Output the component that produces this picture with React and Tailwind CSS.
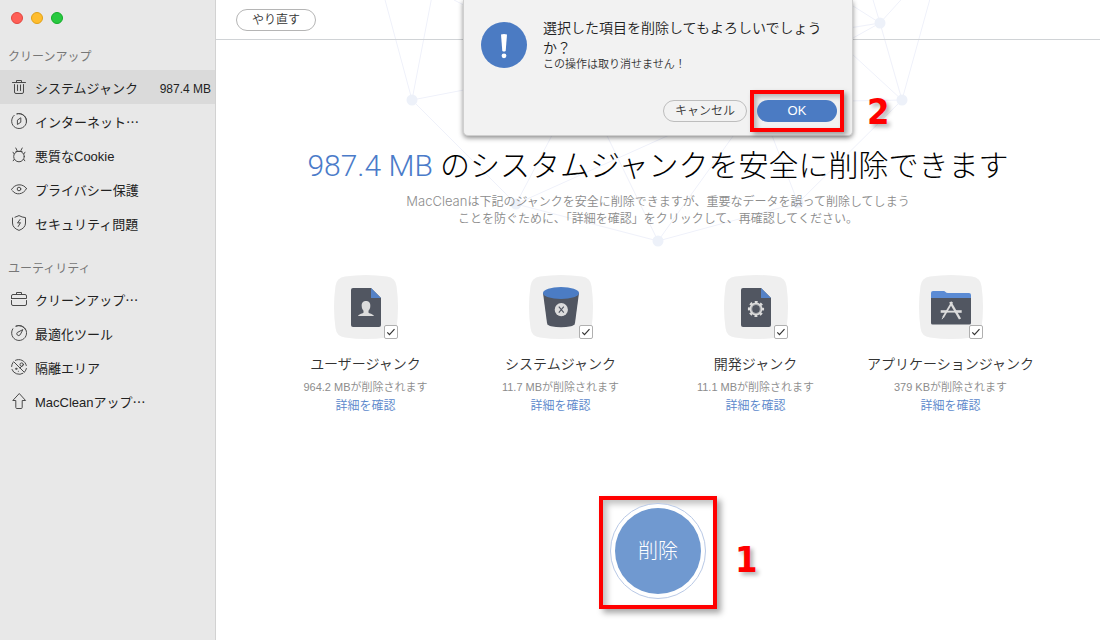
import { useState } from "react";

const stroke = {
  fill: "none",
  stroke: "currentColor",
  strokeWidth: 1,
  strokeLinecap: "round",
  strokeLinejoin: "round",
};

const navIcons = {
  trash: (
    <g {...stroke}>
      <path d="M1.5 3.5h13M5.500 3.500v-2h5v2" />
      <path d="M3.500 5.500V13a1.500 1.500 0 0 0 1.500 1.500h6a1.500 1.500 0 0 0 1.500-1.500V5.500" />
      <path d="M6.500 6v5.500M9.500 6v5.500" />
    </g>
  ),
  compass: (
    <g {...stroke}>
      <path d="M3.200 2.300A7.500 7.500 0 1 0 6 .8" />
      <path d="M6 .8A7.500 7.500 0 0 1 15.400 9" />
      <path d="M9.800 5.200v4l-3.400 2.300v-4z" />
    </g>
  ),
  bug: (
    <g {...stroke}>
      <circle cx="8" cy="9.500" r="5.300" />
      <path d="M5 4.500h6M6.200 3.800L4.800 1M9.800 3.800L11.200 1" />
      <path d="M3.200 7L2 5.200M12.800 7L14 5.200M3.300 12.300L2.200 13.800M12.700 12.300l1.100 1.500" />
    </g>
  ),
  eye: (
    <g {...stroke}>
      <path d="M.5 8.500C4 2.300 12 2.300 15.500 7.500" />
      <path d="M15.500 7.500C12.500 14 4.500 14.500 1.500 9.800" />
      <circle cx="8" cy="8" r="1.800" />
    </g>
  ),
  shield: (
    <g {...stroke}>
      <path d="M4 2.200L8 .6Q11 2.300 14.500 2.600V8q0 5-6.500 7.400Q1.500 13 1.500 8V3" />
      <path d="M9 4.500L6.500 8l3-.3L7.200 11.500" />
    </g>
  ),
  briefcase: (
    <g {...stroke}>
      <path d="M.5 7.500h15V5q0-1.500-1.500-1.500H2Q.5 3.500.5 5v2.500" />
      <path d="M5.500 3.500v-2h5v2M.5 9.500v3.500q0 1.500 1.500 1.500h12q1.500 0 1.500-1.500V9.500" />
    </g>
  ),
  gauge: (
    <g {...stroke}>
      <path d="M1.800 3.800A7.500 7.500 0 1 0 5 1.100" />
      <path d="M5 1.100A7.500 7.500 0 0 1 14.800 5" />
      <path d="M11.500 4.800L6.300 7.500A1.800 1.800 0 1 0 9 10z" />
    </g>
  ),
  quarantine: (
    <g {...stroke}>
      <path d="M4.500 1.300A7.500 7.500 0 0 1 15.300 6.500M15.400 9.500a7.500 7.500 0 0 1-1.600 3.200M12 14.300A7.500 7.500 0 0 1 1 10.500M.6 7.500A7.500 7.500 0 0 1 2 3.500" />
      <path d="M2.800 2.800L13.300 13.300M9 9l2.500-2.500" />
      <circle cx="10.700" cy="5.600" r="1.700" />
      <circle cx="5.200" cy="9.800" r=".7" />
      <path d="M7.300 12.300h.1" />
    </g>
  ),
  arrow: (
    <g {...stroke}>
      <path d="M8 .8L1.800 7.500h3v7q0 1 1 1h4.400q1 0 1-1v-7h3z" />
    </g>
  ),
};

const groups = [
  {
    title: "クリーンアップ",
    items: [
      { icon: "trash", label: "システムジャンク", size: "987.4 MB", active: true },
      { icon: "compass", label: "インターネット⋯" },
      { icon: "bug", label: "悪質なCookie" },
      { icon: "eye", label: "プライバシー保護" },
      { icon: "shield", label: "セキュリティ問題" },
    ],
  },
  {
    title: "ユーティリティ",
    items: [
      { icon: "briefcase", label: "クリーンアップ⋯" },
      { icon: "gauge", label: "最適化ツール" },
      { icon: "quarantine", label: "隔離エリア" },
      { icon: "arrow", label: "MacCleanアップ⋯" },
    ],
  },
];

function Sidebar() {
  return (
    <aside className="flex w-[216px] shrink-0 flex-col border-r border-[#d2d2d2] bg-[#e8e8e8]">
      <div className="flex gap-2 px-[11px] pt-3">
        <button aria-label="閉じる" className="size-3 rounded-full border border-[#e2463f] bg-[#ff5f57]" />
        <button aria-label="しまう" className="size-3 rounded-full border border-[#e1a116] bg-[#ffbd2e]" />
        <button aria-label="拡大" className="size-3 rounded-full border border-[#12ac28] bg-[#28c940]" />
      </div>
      <nav className="flex flex-col gap-[10px] pt-[14px]">
        {groups.map((group) => (
          <section key={group.title}>
            <h2 className="flex h-8 items-center px-2 pt-[6px] text-[12px] text-[#777]">{group.title}</h2>
            <ul>
              {group.items.map((item) => (
                <li key={item.label}>
                  <a
                    href="#"
                    className={
                      "flex h-[34px] items-center pr-1 pl-[11px] text-[13px] text-[#222] " +
                      (item.active ? "bg-[#dadada]" : "")
                    }
                  >
                    <svg viewBox="0 0 16 16" className="mr-2 size-4 shrink-0 text-[#4a4a4a]">
                      {navIcons[item.icon]}
                    </svg>
                    <span className="flex-1 whitespace-nowrap pt-1">{item.label}</span>
                    {item.size && <span className="pt-1 text-[12px]">{item.size}</span>}
                  </a>
                </li>
              ))}
            </ul>
          </section>
        ))}
      </nav>
    </aside>
  );
}

const tile = (
  <path
    d="M11 1.500Q32-1.500 53 1.500Q61.500 2.500 62.500 11Q65.500 32 62.500 53Q61.500 61.500 53 62.500Q32 65.500 11 62.500Q2.500 61.500 1.500 53Q-1.500 32 1.500 11Q2.500 2.500 11 1.500Z"
    fill="#efefef"
  />
);

const file = (
  <>
    <path d="M19 13h18l10 10v27q0 2-2 2H19q-2 0-2-2V15q0-2 2-2z" fill="#515661" />
    <path d="M37 13l10 10H37z" fill="#5482c8" />
  </>
);

const art = {
  user: (
    <>
      {file}
      <path
        d="M32 26c3.200 0 4.500 2.200 4.300 5 0 2-.8 3.600-1.800 4.800v1.700c.5 1.300 4.500 1.200 5.500 3.500H24c1-2.300 5-2.200 5.500-3.500v-1.700c-1-1.200-1.800-2.800-1.800-4.800-.2-2.800 1.100-5 4.300-5z"
        fill="#dcdcdc"
      />
    </>
  ),
  bucket: (
    <>
      <path d="M14 18h36l-4 30q-.5 2.500-4 3.300-10 2-20 0-3.500-.8-4-3.300z" fill="#515661" />
      <ellipse cx="32" cy="18" rx="18" ry="6" fill="#4b7cc4" />
      <circle cx="32.300" cy="34.700" r="6.600" fill="#dcdcdc" />
      <path d="M29.800 31.700l5 6M34.800 31.700l-5 6" stroke="#515661" strokeWidth="1.100" />
    </>
  ),
  gear: (
    <>
      {file}
      <circle cx="32" cy="34" r="7" fill="none" stroke="#dcdcdc" strokeWidth="2.200" strokeDasharray="2.800 2.698" strokeDashoffset="1.400" />
      <circle cx="32" cy="34" r="5.200" fill="none" stroke="#dcdcdc" strokeWidth="2.600" />
      <circle cx="32" cy="34" r="4.600" fill="none" stroke="#8a8d94" strokeWidth=".6" />
    </>
  ),
  folder: (
    <>
      <path d="M12 24v-6q0-2 2-2h10.500q1.500 0 2 1 .7 1 2.500 1h21q2 0 2 2v4z" fill="#5b8bd4" />
      <path d="M12 23h40v25q0 1.500-1.500 1.500h-37Q12 49.500 12 48z" fill="#515661" />
      <path d="M21.700 36.500h21" stroke="#dcdcdc" strokeWidth="2.600" />
      <path d="M32.300 29l-5 8.600h9z" fill="#515661" />
      <path d="M27.500 36.500h9.500" stroke="#dcdcdc" strokeWidth="1.600" />
      <g fill="none" stroke="#dcdcdc">
        <path d="M33.200 27L24 42.500" strokeWidth="1.800" />
        <path d="M31.200 27L41 44" strokeWidth="2.400" />
        <path d="M24.300 42l-1.300 2.200" strokeWidth="1" />
      </g>
    </>
  ),
};

const cards = [
  { art: "user", title: "ユーザージャンク", note: "964.2 MBが削除されます" },
  { art: "bucket", title: "システムジャンク", note: "11.7 MBが削除されます" },
  { art: "gear", title: "開発ジャンク", note: "11.1 MBが削除されます" },
  { art: "folder", title: "アプリケーションジャンク", note: "379 KBが削除されます" },
];

function JunkCard({ card }) {
  const [checked, setChecked] = useState(true);
  return (
    <li className="flex flex-col items-center text-center font-[350]">
      <label className="relative block size-16">
        <svg viewBox="0 0 64 64" className="size-16">
          {tile}
          {art[card.art]}
        </svg>
        <input
          type="checkbox"
          aria-label={card.title}
          checked={checked}
          onChange={(e) => setChecked(e.target.checked)}
          className="peer absolute right-0 bottom-0 size-[14px] appearance-none rounded-[2px] border border-[#b0b0b0] bg-white"
        />
        <svg viewBox="0 0 14 14" className="pointer-events-none absolute right-0 bottom-0 hidden size-[14px] peer-checked:block">
          <path d="M3.300 7.300l2.200 2.400 5-5.500" fill="none" stroke="#333" strokeWidth="1.200" />
        </svg>
      </label>
      <h3 className="mt-[15px] text-[14px] leading-5 whitespace-nowrap text-[#333]">{card.title}</h3>
      <p className="mt-[3px] text-[11px] leading-5 whitespace-nowrap text-[#8c8c8c]">{card.note}</p>
      <a href="#" className="mt-px text-[12px] leading-4 text-[#5b87cb]">詳細を確認</a>
    </li>
  );
}

const nodes = [
  [196, 100],
  [300, 204],
  [442, 241],
  [582, 203],
  [686, 100],
  [664, 23],
];

function Network() {
  return (
    <svg viewBox="0 0 884 260" className="pointer-events-none absolute top-0 left-1/2 h-[260px] w-[884px] -translate-x-1/2">
      <path
        d="M161-30L196 100L221-30M196 100L300 204L442 241L582 203L686 100L664 23L648-30M196 100L310 78M300 204L410-6M300 204L620 60M442 241L335 20M442 241L600 20M582 203L500-10M686 100L520 103M686 100L560-16M664 23L580-30M664 23L560 40M664 23L520 103M664 23L730-50M686 100L722-30M238 0L320 42"
        stroke="#eff1fa"
        fill="none"
      />
      {nodes.map(([x, y]) => (
        <circle key={x} cx={x} cy={y} r="5.500" fill="#edf1f9" />
      ))}
    </svg>
  );
}

function Mark({ children }) {
  return (
    <span className="font-['DejaVu_Sans_Condensed','DejaVu_Sans',sans-serif] text-[36px] leading-none font-bold text-[#f00] [text-shadow:3px_3px_4px_rgba(0,0,0,0.3)]">
      {children}
    </span>
  );
}

function Dialog() {
  return (
    <div
      role="dialog"
      aria-labelledby="confirm-title"
      className="absolute top-0 left-1/2 w-[390px] -translate-x-1/2 rounded-b-[5px] border-x border-b border-[#cfcfcf] bg-[#f2f2f2] pb-[3px] font-[350] shadow-[0_2px_5px_rgba(0,0,0,0.45)]"
    >
      <div className="flex pt-[18px] pl-[17px]">
        <svg viewBox="0 0 46 46" className="mt-1 size-[46px] shrink-0">
          <circle cx="23" cy="23" r="23" fill="#4b7bc3" />
          <path d="M20 12.500q3-1.200 6 0L24.700 29q-1.700 1-3.400 0z" fill="#fff" />
          <circle cx="23" cy="33.800" r="2.400" fill="#fff" />
        </svg>
        <div className="ml-4 w-[284px]">
          <h2 id="confirm-title" className="text-[14px] leading-5 text-[#222]">
            選択した項目を削除してもよろしいでしょうか？
          </h2>
          <p className="text-[11px] leading-3 text-[#333]">この操作は取り消せません！</p>
        </div>
      </div>
      <div className="mt-5 flex items-center justify-end pr-2">
        <button className="mr-[3px] h-[22px] w-[84px] rounded-full border border-[#bdbdbd] text-[12px] leading-5 text-[#333]">
          キャンセル
        </button>
        <div className="relative border-4 border-[#f00] px-[3px] py-[6px] shadow-[3px_3px_5px_rgba(0,0,0,0.35),inset_3px_3px_5px_rgba(0,0,0,0.25)]">
          <button className="block h-[22px] w-20 rounded-full bg-[#4b7bc3] text-[13px] leading-5 text-white">OK</button>
          <div className="absolute top-0 left-[113px]">
            <Mark>2</Mark>
          </div>
        </div>
      </div>
    </div>
  );
}

export default function App() {
  return (
    <div className="flex min-h-screen bg-white font-['Liberation_Sans','Noto_Sans_CJK_JP',sans-serif]">
      <Sidebar />
      <main className="relative flex flex-1 flex-col overflow-hidden">
        <Network />
        <header className="relative flex h-10 items-center border-b border-[#d0d3d6] px-5 pt-px">
          <button className="h-[22px] w-20 rounded-full border border-[#b5b5b5] bg-white text-[12px] leading-5 font-[350] text-[#333]">
            やり直す
          </button>
        </header>
        <div className="relative flex flex-col items-center pt-[104px]">
          <h1 className="text-[30px] leading-[44px] font-light whitespace-nowrap text-black font-['Roboto','Noto_Sans_CJK_JP',sans-serif]">
            <span className="text-[#4b7bc9]">987.4 MB</span> のシスタムジャンクを安全に削除できます
          </h1>
          <p className="mt-[5px] text-center text-[12px] leading-[17px] font-[350] whitespace-nowrap text-[#8c8c8c]">
            <span className="font-['Inter',sans-serif] text-[13px]">MacClean</span>
            は下記のジャンクを安全に削除できますが、重要なデータを誤って削除してしまう
            <br />
            ことを防ぐために、「詳細を確認」をクリックして、再確認してください。
          </p>
          <ul className="mt-[47px] grid w-[780px] grid-cols-4">
            {cards.map((card) => (
              <JunkCard key={card.art} card={card} />
            ))}
          </ul>
          <div className="relative mt-[82px]">
            <div className="border-4 border-[#f00] px-[7px] pt-[3px] pb-[6px] shadow-[4px_4px_6px_rgba(0,0,0,0.35),inset_4px_4px_6px_rgba(0,0,0,0.25)]">
              <div className="rounded-full border border-[#b9c9e6] bg-white p-1">
                <button className="block size-[86px] rounded-full bg-[#7099d0] text-[20px] font-light text-white">
                  削除
                </button>
              </div>
            </div>
            <div className="absolute top-[46px] left-[136px]">
              <Mark>1</Mark>
            </div>
          </div>
        </div>
        <Dialog />
      </main>
    </div>
  );
}
